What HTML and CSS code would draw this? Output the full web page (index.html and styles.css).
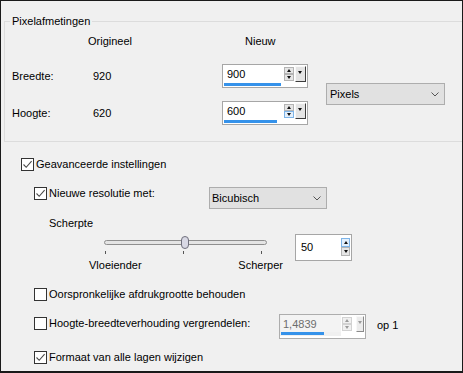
FILE: index.html
```html
<!DOCTYPE html>
<html lang="nl">
<head>
	<title>Afbeeldingsgrootte</title>
	<link rel="stylesheet" href="styles.css">
</head>
<body>
	<div class="window">
		<div class="group">
			<span class="legend">Pixelafmetingen</span>
			<div class="heads">
				<span class="h-orig">Origineel</span><span class="h-new">Nieuw</span>
			</div>
			<div class="dims">
				<span class="lbl">Breedte:</span>
				<span class="val">920</span>
				<div class="spin">
					<div class="field"><span class="num">900</span><i class="bar" style="width:57px"></i></div>
					<div class="arrows"><b class="btn up"></b><b class="btn down"></b></div>
					<b class="drop"></b>
				</div>
				<div class="combo unit">
					<span>Pixels</span>
					<svg width="8" height="5" viewBox="0 0 8 5"><path d="M0.5 0.5 L4 4 L7.5 0.5" fill="none" stroke="#555"/></svg>
				</div>
				<span class="lbl">Hoogte:</span>
				<span class="val">620</span>
				<div class="spin">
					<div class="field"><span class="num">600</span><i class="bar" style="width:53px"></i></div>
					<div class="arrows"><b class="btn up"></b><b class="btn down hot"></b></div>
					<b class="drop"></b>
				</div>
			</div>
		</div>

		<div class="options">
			<div class="row row-adv">
				<span class="check"><svg width="11" height="11" viewBox="0 0 11 11"><path d="M1.5 5.5 L4.2 8.3 L9.6 2.2" fill="none" stroke="#4a4a4a" stroke-width="1.1"/></svg></span>
				<span>Geavanceerde instellingen</span>
			</div>

			<div class="sub">
				<div class="row row-res">
					<span class="check"><svg width="11" height="11" viewBox="0 0 11 11"><path d="M1.5 5.5 L4.2 8.3 L9.6 2.2" fill="none" stroke="#4a4a4a" stroke-width="1.1"/></svg></span>
					<span class="res-lbl">Nieuwe resolutie met:</span>
					<div class="combo method">
						<span>Bicubisch</span>
						<svg width="8" height="5" viewBox="0 0 8 5"><path d="M0.5 0.5 L4 4 L7.5 0.5" fill="none" stroke="#555"/></svg>
					</div>
				</div>

				<div class="sharp-lbl">Scherpte</div>

				<div class="sharp">
					<div class="slider">
						<div class="track-wrap">
							<div class="track"></div>
							<span class="thumb"></span>
						</div>
						<div class="ticks"><i></i><i></i><i></i></div>
						<div class="ends"><span>Vloeiender</span><span>Scherper</span></div>
					</div>
					<div class="spin spin-50">
						<div class="field"><span class="num">50</span></div>
						<div class="arrows"><b class="btn up hot"></b><b class="btn down"></b></div>
					</div>
				</div>

				<div class="row row-keep">
					<span class="check"></span>
					<span>Oorspronkelijke afdrukgrootte behouden</span>
				</div>

				<div class="row row-lock">
					<span class="check"></span>
					<span class="lock-lbl">Hoogte-breedteverhouding vergrendelen:</span>
					<div class="spin spin-off">
						<div class="field"><span class="num">1,4839</span><i class="bar" style="width:43px"></i></div>
						<div class="arrows"><b class="btn up"></b><b class="btn down"></b></div>
						<b class="drop"></b>
					</div>
					<span class="op">op 1</span>
				</div>

				<div class="row row-layers">
					<span class="check"><svg width="11" height="11" viewBox="0 0 11 11"><path d="M1.5 5.5 L4.2 8.3 L9.6 2.2" fill="none" stroke="#4a4a4a" stroke-width="1.1"/></svg></span>
					<span>Formaat van alle lagen wijzigen</span>
				</div>
			</div>
		</div>
	</div>
</body>
</html>
```

FILE: styles.css
```css
body {
	margin: 0;
	font-family: "Liberation Sans", Arial, sans-serif;
	font-size: 11px;
	color: #000;
}

div.window {
	width: 463px;
	height: 373px;
	box-sizing: border-box;
	border: solid #1a1a1a;
	border-width: 1px 1px 2px 1px;
	background: #f0f0f0;
	overflow: hidden;
}

/* Pixelafmetingen group */
div.group {
	position: relative;
	margin: 20px 0 0 3px;
	height: 121px;
	box-sizing: border-box;
	border: 1px solid #dcdcdc;
	border-right: none;
	padding: 12px 0 0 7px;
}

span.legend {
	position: absolute;
	left: 5px;
	top: -8px;
	padding: 0 2px 0 2px;
	line-height: 14px;
	background: #f0f0f0;
}

div.heads {
	height: 17px;
	line-height: 14px;
	margin-bottom: 13px;
}

span.h-orig {
	display: inline-block;
	width: 233px;
	padding-left: 76px;
	box-sizing: border-box;
}

div.dims {
	display: grid;
	grid-template-columns: 81px 129px 104px 119px;
	grid-template-rows: 24px 24px;
	row-gap: 13px;
	align-items: center;
}

div.dims .unit {
	grid-column: 4;
	grid-row: 1 / 3;
	align-self: start;
	margin-top: 19px;
}

span.lbl, span.val {
	line-height: 14px;
}

/* spin boxes */
div.spin {
	display: flex;
	width: 86px;
	height: 24px;
	box-sizing: border-box;
	border: 1px solid #a6a6a6;
	background: #fff;
}

div.field {
	display: flex;
	flex-direction: column;
	width: 60px;
	padding-left: 1px;
	box-sizing: border-box;
}

span.num {
	height: 18px;
	line-height: 19px;
	padding-left: 3px;
}

i.bar {
	display: block;
	height: 3px;
	background: #3592ea;
}

div.arrows {
	display: flex;
	flex-direction: column;
	margin: 2px 0 0 1px;
}

b.btn {
	position: relative;
	width: 10px;
	height: 7px;
	box-sizing: border-box;
	border: 1px solid #b4b4b4;
	background: #e6e6e6;
}

b.btn.hot {
	border-color: #7db4e8;
	background: #e3effb;
}

b.btn::after {
	content: "";
	position: absolute;
	left: 2px;
	border-left: 2px solid transparent;
	border-right: 2px solid transparent;
}

b.up::after {
	top: 1px;
	border-bottom: 3px solid #111;
}

b.down::after {
	top: 1px;
	border-top: 3px solid #111;
}

b.drop {
	position: relative;
	width: 11px;
	height: 16px;
	margin: 1px 0 0 1px;
	box-sizing: border-box;
	border: 1px solid;
	border-color: #f8f8f8 #3c3c3c #3c3c3c #f8f8f8;
	background: #e4e4e4;
}

b.drop::after {
	content: "";
	position: absolute;
	left: 2px;
	top: 4px;
	border-left: 2.5px solid transparent;
	border-right: 2.5px solid transparent;
	border-top: 3px solid #111;
}

div.spin-50 {
	width: 57px;
	height: 27px;
	margin: 3px 0 0 12px;
}

div.spin-50 div.field {
	width: 45px;
	padding-left: 2px;
}

div.spin-50 span.num {
	height: 25px;
	line-height: 25px;
}

div.spin-50 div.arrows {
	margin: 3px 0 0 0;
}

div.spin-50 b.btn {
	width: 9px;
	height: 9px;
}

div.spin-50 b.up::after, div.spin-50 b.down::after {
	left: 1.5px;
	top: 2px;
}

div.spin-off {
	width: 87px;
	height: 25px;
	border-color: #adadad;
	background: #fff;
}

div.spin-off div.field {
	width: 61px;
	background: #f0f0f0;
	border-bottom: 2px solid #fff;
}

div.spin-off span.num {
	color: #6d6d6d;
	height: 17px;
	line-height: 19px;
	padding-left: 2px;
	background: #f3f3f3;
}

div.spin-off b.btn {
	border-color: #d2d2d2;
	background: #f0f0f0;
}

div.spin-off b.up::after {
	border-bottom-color: #9a9a9a;
}

div.spin-off b.down::after {
	border-top-color: #9a9a9a;
}

div.spin-off b.drop {
	margin-left: 4px;
	width: 8px;
	border-color: #f8f8f8 #8a8a8a #8a8a8a #f8f8f8;
	background: #ececec;
}

div.spin-off b.drop::after {
	left: 1px;
	border-top-color: #9a9a9a;
}

/* combo boxes */
div.combo {
	display: flex;
	align-items: center;
	justify-content: space-between;
	width: 119px;
	height: 22px;
	box-sizing: border-box;
	padding: 0 5px 0 3px;
	border: 1px solid #adadad;
	background: #e1e1e1;
}

div.method {
	width: 118px;
	padding-left: 2px;
}

/* options below the group */
div.options {
	padding-left: 20px;
}

div.row {
	display: flex;
	align-items: flex-start;
	line-height: 13px;
}

span.check {
	flex: none;
	display: flex;
	align-items: center;
	justify-content: center;
	width: 13px;
	height: 13px;
	box-sizing: border-box;
	margin-right: 2px;
	border: 1px solid #333;
	background: #fff;
}

div.row-adv {
	margin-top: 16px;
}

div.sub {
	padding-left: 13px;
}

div.row-res {
	margin-top: 16px;
}

span.res-lbl {
	width: 160px;
	line-height: 13px;
}

div.sharp-lbl {
	margin-top: 7px;
	padding-left: 15px;
	line-height: 14px;
}

div.sharp {
	display: flex;
	margin-top: 1px;
	padding-left: 55px;
}

div.slider {
	width: 194px;
}

div.track-wrap {
	position: relative;
	height: 18px;
	box-sizing: border-box;
	padding: 9px 0 0 15px;
}

div.track {
	width: 163px;
	height: 5px;
	box-sizing: border-box;
	border: 1px solid #8e8e8e;
	border-radius: 3px;
	background: #e4e4e4;
}

span.thumb {
	position: absolute;
	left: 92px;
	top: 5px;
	width: 8px;
	height: 13px;
	box-sizing: border-box;
	border: 1px solid #6f6f7c;
	border-radius: 4px;
	background: #d8d8e4;
}

div.ticks {
	display: flex;
	justify-content: space-between;
	width: 157px;
	height: 3px;
	margin: 2px 0 0 16px;
}

div.ticks i {
	width: 1px;
	background: #555;
}

div.ends {
	display: flex;
	justify-content: space-between;
	margin-top: 4px;
	line-height: 14px;
}

div.row-keep {
	margin-top: 16px;
}

div.row-lock {
	margin-top: 13px;
}

div.row-lock span.check {
	margin-top: 3px;
}

span.lock-lbl {
	width: 230px;
	margin-top: 3px;
}

span.op {
	margin: 5px 0 0 11px;
}

div.row-layers {
	margin-top: 12px;
}
```
